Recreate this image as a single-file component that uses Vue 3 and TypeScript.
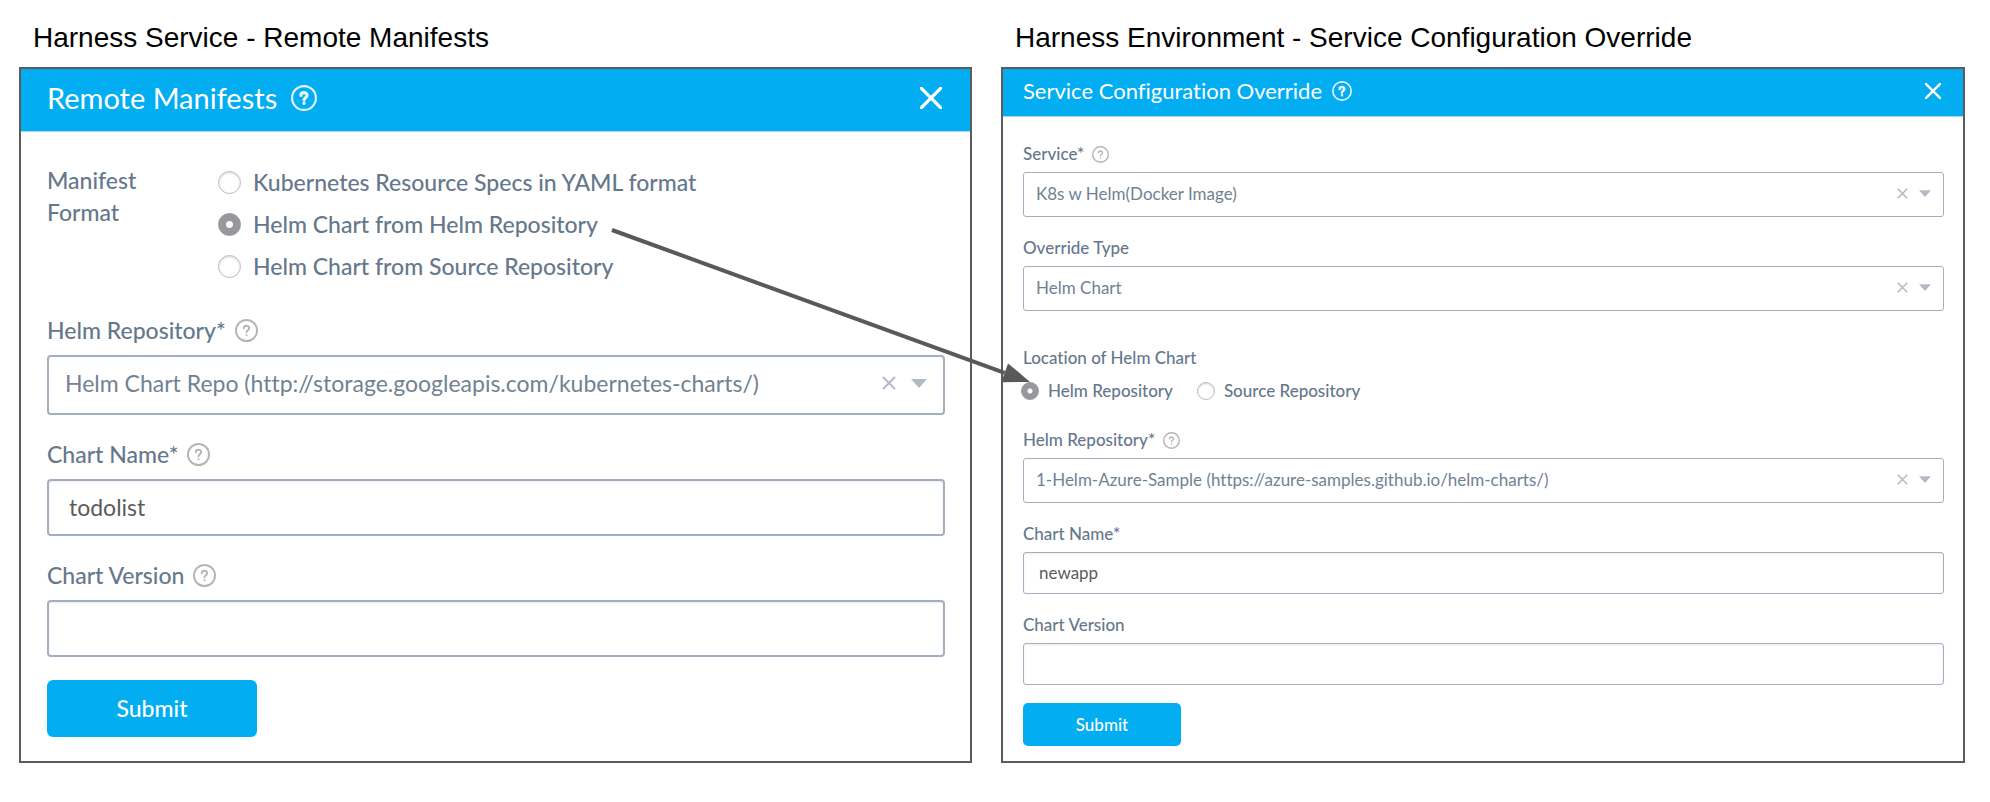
<script setup lang="ts">
import { nextTick, onBeforeUnmount, onMounted, reactive, ref } from 'vue'

interface Field {
  id: string
  kind: 'select' | 'text' | 'radio'
  label: string
  value: string
  help?: boolean
  options?: string[]
}

interface Dialog {
  id: string
  size: 'large' | 'small'
  caption: string
  title: string
  fields: Field[]
}

const dialogs = reactive<Dialog[]>([
  {
    id: 'service',
    size: 'large',
    caption: 'Harness Service - Remote Manifests',
    title: 'Remote Manifests',
    fields: [
      {
        id: 'format',
        kind: 'radio',
        label: 'Manifest Format',
        value: 'Helm Chart from Helm Repository',
        options: [
          'Kubernetes Resource Specs in YAML format',
          'Helm Chart from Helm Repository',
          'Helm Chart from Source Repository',
        ],
      },
      {
        id: 'repository',
        kind: 'select',
        label: 'Helm Repository*',
        value: 'Helm Chart Repo (http://storage.googleapis.com/kubernetes-charts/)',
        help: true,
      },
      { id: 'chart', kind: 'text', label: 'Chart Name*', value: 'todolist', help: true },
      { id: 'version', kind: 'text', label: 'Chart Version', value: '', help: true },
    ],
  },
  {
    id: 'environment',
    size: 'small',
    caption: 'Harness Environment - Service Configuration Override',
    title: 'Service Configuration Override',
    fields: [
      { id: 'service', kind: 'select', label: 'Service*', value: 'K8s w Helm(Docker Image)', help: true },
      { id: 'type', kind: 'select', label: 'Override Type', value: 'Helm Chart' },
      {
        id: 'location',
        kind: 'radio',
        label: 'Location of Helm Chart',
        value: 'Helm Repository',
        options: ['Helm Repository', 'Source Repository'],
      },
      {
        id: 'repository',
        kind: 'select',
        label: 'Helm Repository*',
        value: '1-Helm-Azure-Sample (https://azure-samples.github.io/helm-charts/)',
        help: true,
      },
      { id: 'chart', kind: 'text', label: 'Chart Name*', value: 'newapp' },
      { id: 'version', kind: 'text', label: 'Chart Version', value: '' },
    ],
  },
])

const choices = new Map(
  dialogs.flatMap((d) => d.fields.map((f) => [`${d.id}-${f.id}`, f.value] as [string, string])),
)

// The connector runs from the selected manifest format to the selected chart location.
const page = ref<HTMLElement | null>(null)
const arrow = reactive({ x1: 0, y1: 0, x2: 0, y2: 0, head: '' })

function placeArrow(): void {
  const root = page.value
  const from = root?.querySelector('.dialog--large input:checked + span')
  const to = root?.querySelector('.dialog--small input:checked')
  if (!root || !from || !to) return
  const origin = root.getBoundingClientRect()
  const a = from.getBoundingClientRect()
  const b = to.getBoundingClientRect()
  const startX = a.right - origin.left + 14
  const startY = a.top + a.height / 2 - origin.top + 6
  const tipX = b.left + b.width / 2 - origin.left
  const tipY = b.top - origin.top
  const length = Math.hypot(tipX - startX, tipY - startY)
  const ux = (tipX - startX) / length
  const uy = (tipY - startY) / length
  const baseX = tipX - ux * 27
  const baseY = tipY - uy * 27
  arrow.x1 = startX
  arrow.y1 = startY
  arrow.x2 = baseX
  arrow.y2 = baseY
  arrow.head = `${tipX},${tipY} ${baseX - uy * 10},${baseY + ux * 10} ${baseX + uy * 10},${baseY - ux * 10}`
}

onMounted(async () => {
  await nextTick()
  placeArrow()
  document.fonts.ready.then(placeArrow)
  window.addEventListener('resize', placeArrow)
})
onBeforeUnmount(() => window.removeEventListener('resize', placeArrow))
</script>

<template>
  <main ref="page" class="page">
    <section v-for="dialog in dialogs" :key="dialog.id" class="column">
      <h1 class="caption">{{ dialog.caption }}</h1>
      <form class="dialog" :class="`dialog--${dialog.size}`" @submit.prevent>
        <header class="header">
          <h2 class="title">{{ dialog.title }}</h2>
          <svg class="help help--title" viewBox="0 0 24 24" role="img" aria-label="Help">
            <circle cx="12" cy="12" r="11" />
            <path class="mark" d="M9.2 9.6c0-3.4 5.6-3.4 5.6 0 0 2.1-2.8 2.1-2.8 4.2M12 16.8v.2" />
          </svg>
          <button type="button" class="close" aria-label="Close">
            <svg viewBox="0 0 20 20"><path d="M1 1l18 18M19 1L1 19" /></svg>
          </button>
        </header>

        <div class="body">
          <template v-for="field in dialog.fields" :key="field.id">
            <fieldset v-if="field.kind === 'radio'" class="choice" :aria-label="field.label">
              <div class="choice-name">{{ field.label }}</div>
              <div class="options">
                <label v-for="option in field.options" :key="option" class="option">
                  <input
                    v-model="field.value"
                    type="radio"
                    :name="`${dialog.id}-${field.id}`"
                    :value="option"
                    @change="nextTick(placeArrow)"
                  />
                  <span>{{ option }}</span>
                </label>
              </div>
            </fieldset>

            <div v-else class="field">
              <div class="label-row">
                <label :for="`${dialog.id}-${field.id}`">{{ field.label }}</label>
                <svg v-if="field.help" class="help" viewBox="0 0 24 24" role="img" aria-label="Help">
                  <circle cx="12" cy="12" r="11" />
                  <path class="mark" d="M9.2 9.6c0-3.4 5.6-3.4 5.6 0 0 2.1-2.8 2.1-2.8 4.2M12 16.8v.2" />
                </svg>
              </div>
              <div v-if="field.kind === 'select'" class="picker">
                <select :id="`${dialog.id}-${field.id}`" v-model="field.value">
                  <option value=""></option>
                  <option>{{ choices.get(`${dialog.id}-${field.id}`) }}</option>
                </select>
                <div class="tools">
                  <button type="button" class="clear" aria-label="Clear" @click="field.value = ''">
                    <svg viewBox="0 0 14 14"><path d="M1 1l12 12M13 1L1 13" /></svg>
                  </button>
                  <svg class="caret" viewBox="0 0 16 9"><path d="M0 0h16L8 9z" /></svg>
                </div>
              </div>
              <input
                v-else
                :id="`${dialog.id}-${field.id}`"
                v-model="field.value"
                class="text"
                type="text"
                autocomplete="off"
              />
            </div>
          </template>
          <button type="submit" class="submit">Submit</button>
        </div>
      </form>
    </section>

    <svg class="connector" aria-hidden="true">
      <line :x1="arrow.x1" :y1="arrow.y1" :x2="arrow.x2" :y2="arrow.y2" />
      <polygon :points="arrow.head" />
    </svg>
  </main>
</template>

<style>
body {
  margin: 0;
  background: #fff;
}
</style>

<style scoped>
.page {
  position: relative;
  display: grid;
  grid-template-columns: minmax(0, 953fr) minmax(0, 964fr);
  column-gap: 29px;
  padding: 0 25px 39px 19px;
  font-family: Lato, 'Noto Sans', sans-serif;
  font-variant-ligatures: none;
}

.column {
  display: flex;
  flex-direction: column;
}

.caption {
  margin: 0;
  padding: 22px 14px 13px;
  font: 400 28px/32px 'Liberation Sans', Arial, sans-serif;
  color: #000;
}

.dialog {
  flex: 1;
  border: 2px solid #5c5c5c;
  background: #fff;
  color: #65788b;
  font-size: var(--text);
  line-height: var(--line);
}

.dialog--large {
  --text: 23px;
  --line: 32px;
  --side: 26px;
  --stroke: 2px;
  --help: 23px;
  --radio: 23px;
  --text-height: 57px;
  --field-gap: 23px;
  --label-gap: 9px;
}

.dialog--small {
  --text: 17px;
  --line: 24px;
  --side: 20px;
  --stroke: 1px;
  --help: 17px;
  --radio: 18px;
  --text-height: 42px;
  --field-gap: 19px;
  --label-gap: 6px;
}

.header {
  display: flex;
  align-items: center;
  box-sizing: border-box;
  padding: 0 var(--side) 4px;
  border-bottom: 1px solid #a9d8ee;
  background: #02adf2;
  color: #fff;
}

.dialog--large .header {
  height: 63px;
}

.dialog--small .header {
  height: 48px;
}

.title {
  margin: 0;
  font-weight: 400;
  font-size: 29px;
}

.dialog--small .title {
  font-size: 22px;
}

.help {
  width: var(--help);
  height: var(--help);
  margin-left: 9px;
  overflow: visible;
  fill: none;
  stroke: #b5b5b5;
  stroke-width: 2;
  stroke-linecap: round;
  stroke-linejoin: round;
}

.dialog--small .help {
  margin-left: 8px;
}

.help--title {
  stroke: #e4f5fd;
}

.help--title .mark {
  stroke-width: 3;
}

.dialog--large .help--title {
  width: 26px;
  height: 26px;
  margin-left: 14px;
}

.dialog--small .help--title {
  width: 20px;
  height: 20px;
  margin-left: 10px;
}

button {
  padding: 0;
  border: 0;
  background: none;
  cursor: pointer;
}

.close {
  display: flex;
  margin-left: auto;
  margin-right: 2px;
}

.close svg {
  width: 22px;
  height: 22px;
  fill: none;
  stroke: #fff;
  stroke-width: 3;
  stroke-linecap: round;
}

.dialog--small .close svg {
  width: 16px;
  height: 16px;
}

.body {
  padding: 29px 25px 24px 26px;
}

.dialog--small .body {
  padding: 25px 19px 15px 20px;
}

.choice {
  display: flex;
  min-width: 0;
  margin: 0 0 27px;
  padding: 0;
  border: 0;
  font-weight: 500;
}

.choice-name {
  width: 120px;
  margin-right: 51px;
  padding-top: 3px;
}

.options {
  display: flex;
  flex-direction: column;
}

.option {
  display: flex;
  align-items: center;
  gap: 12px;
  height: 42px;
}

.dialog--small .choice {
  flex-direction: column;
  gap: 9px;
  margin: 35px 0 25px;
}

.dialog--small .choice-name {
  width: auto;
  margin: 0;
  padding: 0;
}

.dialog--small .options {
  flex-direction: row;
  gap: 24px;
  margin-left: -2px;
}

.dialog--small .option {
  gap: 9px;
  height: 24px;
}

.option input {
  appearance: none;
  box-sizing: border-box;
  flex: none;
  width: var(--radio);
  height: var(--radio);
  margin: 0;
  border: 1px solid #bdbdbd;
  border-radius: 50%;
  background: #fff;
  box-shadow: inset 0 1px 2px #d4d4d4;
}

.option input:checked {
  border-color: #98979c;
  background: radial-gradient(circle, #fff 0 3px, #98979c 4px);
  box-shadow: none;
}

.dialog--small .option input:checked {
  background: radial-gradient(circle, #fff 0 2px, #98979c 3px);
}

.field {
  margin-bottom: var(--field-gap);
}

.field:has(+ .choice) {
  margin-bottom: 0;
}

.dialog--small .field:has(+ .submit) {
  margin-bottom: 18px;
}

.label-row {
  display: flex;
  align-items: center;
  margin-bottom: var(--label-gap);
  font-weight: 500;
}

.picker {
  position: relative;
}

select,
.text {
  display: block;
  box-sizing: border-box;
  width: 100%;
  margin: 0;
  border: var(--stroke) solid #a3afc0;
  border-radius: 4px;
  background: #fff;
  font-family: inherit;
  font-size: var(--text);
  font-variant-ligatures: none;
}

.dialog--small select,
.dialog--small .text {
  border-radius: 3px;
}

select {
  appearance: none;
  height: 60px;
  padding: 0 80px 4px 16px;
  color: #718293;
}

.dialog--small select {
  height: 45px;
  padding: 0 60px 3px 12px;
}

.text {
  height: var(--text-height);
  padding: 0 20px 2px;
  color: #5b5b5b;
  box-shadow: inset 0 1px 2px #ececec;
}

.dialog--small .text {
  padding: 0 15px 2px;
}

/* The clear and open marks lie over the right end of the select. */
.tools {
  position: absolute;
  top: 0;
  right: 18px;
  bottom: 4px;
  display: flex;
  align-items: center;
  gap: 15px;
  pointer-events: none;
}

.clear {
  display: flex;
  pointer-events: auto;
}

.clear svg {
  width: 14px;
  height: 14px;
  fill: none;
  stroke: #b4bac6;
  stroke-width: 2;
}

.caret {
  width: 16px;
  height: 9px;
  fill: #b3bac7;
}

.dialog--small .tools {
  right: 13px;
  bottom: 3px;
  gap: 11px;
}

.dialog--small .clear svg {
  width: 11px;
  height: 11px;
}

.dialog--small .caret {
  width: 12px;
  height: 7px;
}

.submit {
  display: block;
  width: 210px;
  height: 57px;
  padding-bottom: 2px;
  border-radius: 6px;
  background: #02adf2;
  color: #fff;
  font-family: inherit;
  font-size: var(--text);
  font-weight: 500;
}

.dialog--small .submit {
  width: 158px;
  height: 43px;
  padding-bottom: 0;
  border-radius: 5px;
}

.connector {
  position: absolute;
  inset: 0;
  width: 100%;
  height: 100%;
  fill: #595959;
  stroke: #595959;
  pointer-events: none;
}

.connector line {
  stroke-width: 4;
}

.connector polygon {
  stroke: none;
}
</style>
